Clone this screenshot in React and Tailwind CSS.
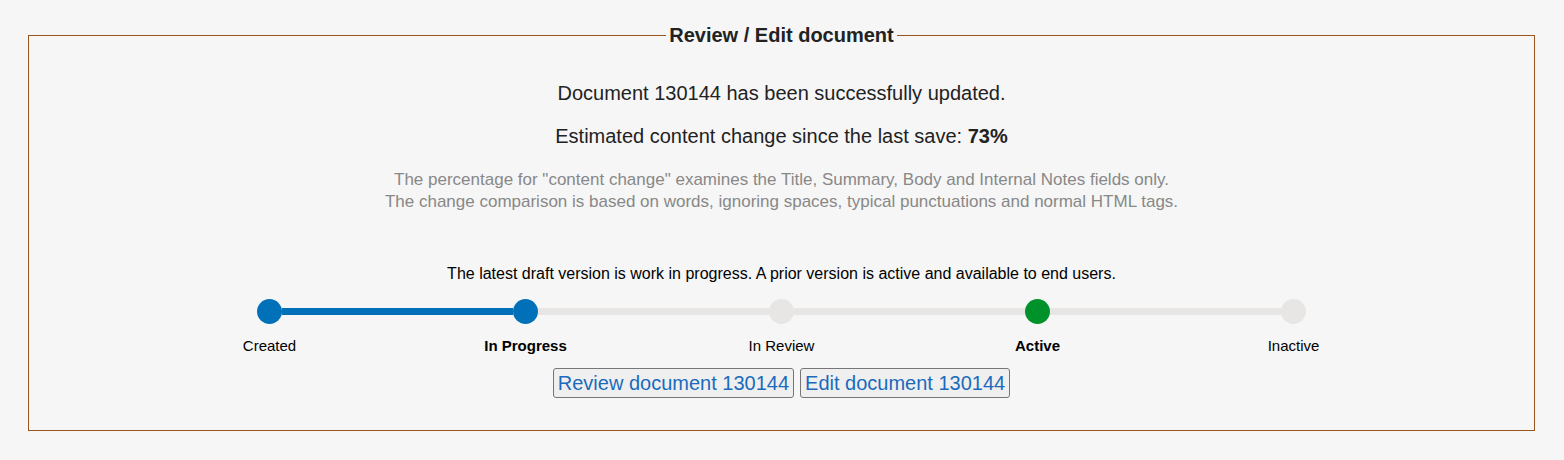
const steps = [
    { label: "Created", dot: "bg-[#0070b8]", left: "bg-transparent", right: "bg-[#0070b8]", bold: false },
    { label: "In Progress", dot: "bg-[#0070b8]", left: "bg-[#0070b8]", right: "bg-[#e7e6e4]", bold: true },
    { label: "In Review", dot: "bg-[#e7e6e4]", left: "bg-[#e7e6e4]", right: "bg-[#e7e6e4]", bold: false },
    { label: "Active", dot: "bg-[#00922a]", left: "bg-[#e7e6e4]", right: "bg-[#e7e6e4]", bold: true },
    { label: "Inactive", dot: "bg-[#e7e6e4]", left: "bg-[#e7e6e4]", right: "bg-transparent", bold: false },
];

function Stepper() {
    return (
        <div className="mx-auto grid w-[1280px] grid-cols-5">
            {steps.map((s) => (
                <div key={s.label} className="flex flex-col items-center">
                    <div className="flex w-full items-center">
                        <div className={`h-[7px] flex-1 ${s.left}`} />
                        <div className={`h-[25px] w-[25px] rounded-full ${s.dot}`} />
                        <div className={`h-[7px] flex-1 ${s.right}`} />
                    </div>
                    <div className={`mt-[13px] text-[15px] leading-[18px] text-black ${s.bold ? "font-bold" : ""}`}>
                        {s.label}
                    </div>
                </div>
            ))}
        </div>
    );
}

export default function App() {
    return (
        <div className="min-h-[460px] bg-[#f6f6f6] pt-[23px] font-['Liberation_Sans',Arial,sans-serif] text-[#222]">
            <fieldset className="ml-[28px] w-[1507px] border border-[#98561e] pb-[32px] text-center">
                <legend className="mx-auto px-[3px] text-[20px] font-bold leading-[24px] text-[#222]">
                    Review / Edit document
                </legend>
                <p className="mt-[34px] text-[20px] leading-[24px]">Document 130144 has been successfully updated.</p>
                <p className="mt-[19px] text-[20px] leading-[24px]">
                    Estimated content change since the last save: <b>73%</b>
                </p>
                <div className="mt-[21px] text-[17px] leading-[22px] text-[#888]">
                    <p>The percentage for "content change" examines the Title, Summary, Body and Internal Notes fields only.</p>
                    <p>The change comparison is based on words, ignoring spaces, typical punctuations and normal HTML tags.</p>
                </div>
                <p className="mt-[51px] text-[16px] leading-[20px] text-black">
                    The latest draft version is work in progress. A prior version is active and available to end users.
                </p>
                <div className="mt-[15px]">
                    <Stepper />
                </div>
                <div className="mt-[13px] flex justify-center gap-[6px]">
                    <button className="h-[30px] rounded-[3px] border border-[#767676] bg-[#efefef] px-[4px] text-[20px] leading-[24px] text-[#1a6bbd]">
                        Review document 130144
                    </button>
                    <button className="h-[30px] rounded-[3px] border border-[#767676] bg-[#efefef] px-[4px] text-[20px] leading-[24px] text-[#1a6bbd]">
                        Edit document 130144
                    </button>
                </div>
            </fieldset>
        </div>
    );
}
